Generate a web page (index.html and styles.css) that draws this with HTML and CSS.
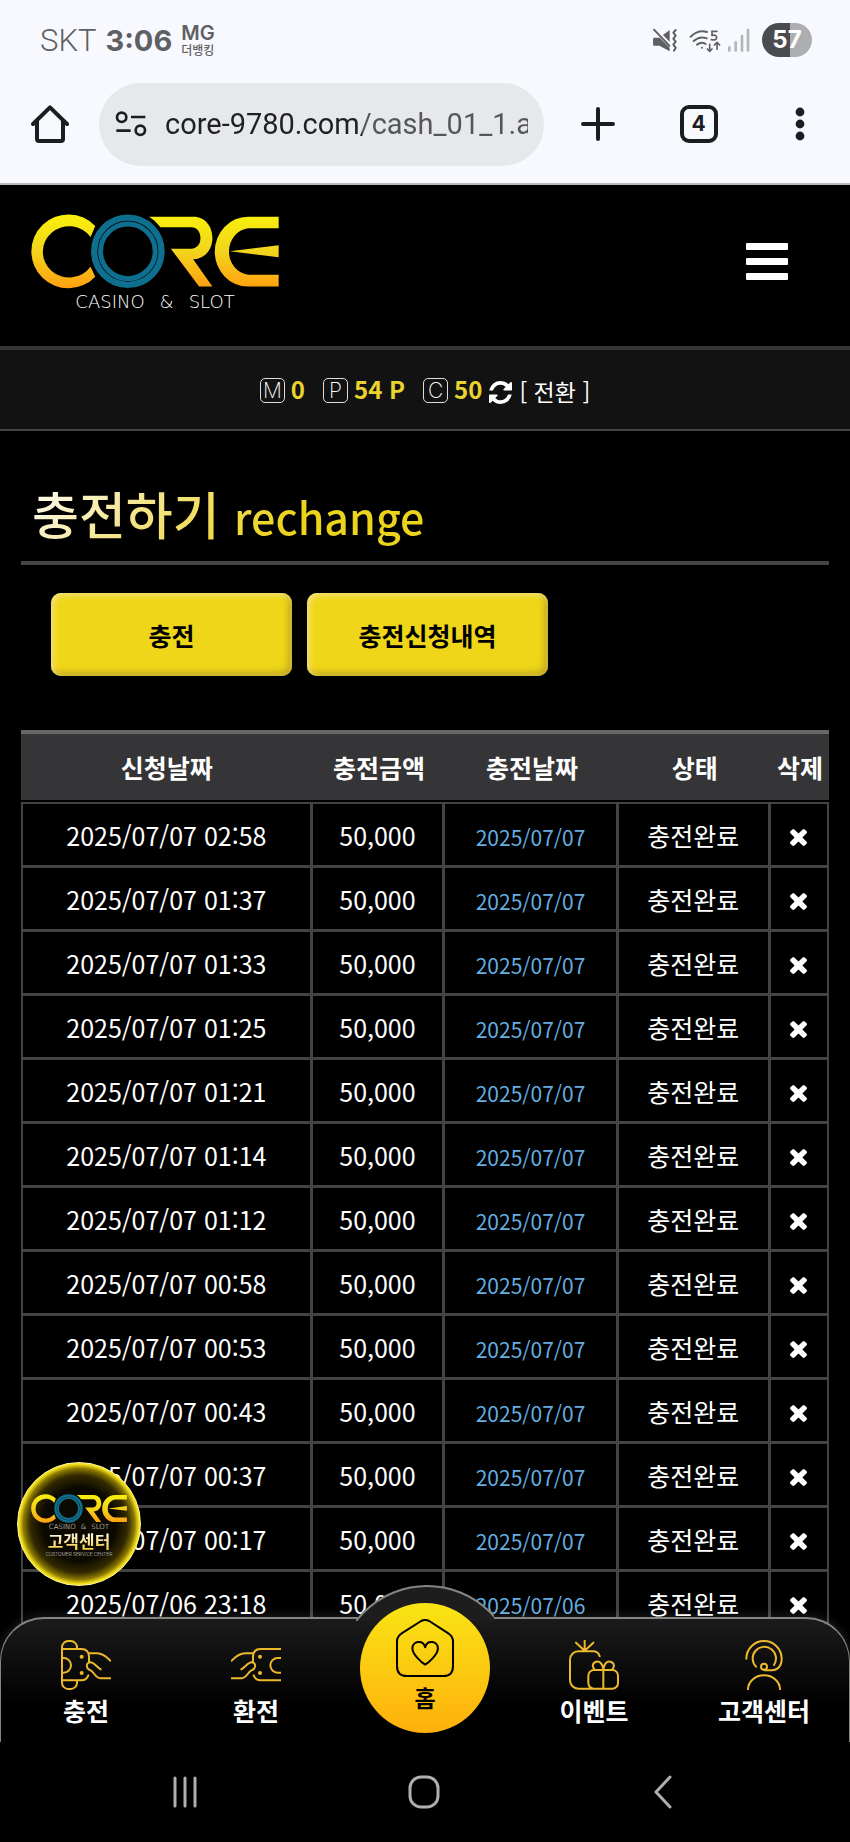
FILE: index.html
```html
<!DOCTYPE html>
<html lang="ko">
<head>
<meta charset="utf-8">
<meta name="viewport" content="width=device-width, initial-scale=1">
<title>CORE CASINO &amp; SLOT - 충전하기</title>
<link rel="stylesheet" href="styles.css">
</head>
<body>
<svg class="defs" aria-hidden="true">
  <defs>
    <linearGradient id="gold" x1="0" y1="75" x2="0" y2="297" gradientUnits="userSpaceOnUse">
      <stop offset="0" stop-color="#f8f00c"/><stop offset=".5" stop-color="#f3d41c"/><stop offset="1" stop-color="#ffa010"/>
    </linearGradient>
    <symbol id="logo" viewBox="93 74 745 225">
      <g fill="url(#gold)">
        <path d="M286 110A111 111 0 1 0 286 262L272 232A79 77 0 1 1 272 143Z"/>
        <path d="M448 82H582C615 82 638 110 638 146C638 182 614 209 580 210L638 292H598L513 178H574C592 178 602 164 602 146C602 128 592 114 574 114H482Q468 94 448 82Z"/>
        <path d="M837 82H745A100 105 0 0 0 745 292H837V256H745A65 70 0 0 1 745 117H837Z"/>
        <path d="M690 186L837 168V204Z"/>
      </g>
      <g fill="none" stroke="#0f6f8f">
        <circle cx="384" cy="186" r="101" stroke-width="19"/>
        <circle cx="384" cy="186" r="82" stroke-width="15"/>
      </g>
    </symbol>
    <symbol id="times" viewBox="110 366 1188 1188">
      <path fill="currentColor" d="M1298 1322q0 40-28 68l-136 136q-28 28-68 28t-68-28l-294-294-294 294q-28 28-68 28t-68-28l-136-136q-28-28-28-68t28-68l294-294-294-294q-28-28-28-68t28-68l136-136q28-28 68-28t68 28l294 294 294-294q28-28 68-28t68 28l136 136q28 28 28 68t-28 68l-294 294 294 294q28 28 28 68z"/>
    </symbol>
  </defs>
</svg>

<div class="status">
  <span class="carrier">SKT</span>
  <span class="clock">3:06</span>
  <span class="notice"><b>MG</b><small>더뱅킹</small></span>
  <span class="indicators">
    <svg width="26" height="26" viewBox="0 0 78 78" fill="#5f6064" stroke="#5f6064">
      <path stroke="none" d="M4 32H22L53 9V73L22 56H4Q2 44 4 32Z"/>
      <path d="M6 6L60 60" stroke="#f8f9fe" stroke-width="12"/>
      <path d="M6 8L52 56" stroke-width="6" stroke-linecap="round"/>
      <path fill="none" stroke-width="6" stroke-linecap="round" stroke-linejoin="round" d="M71 9L64 17L71 26L64 35L71 44L64 53L71 62L66 71"/>
    </svg>
    <svg class="wifi" width="32" height="26" viewBox="0 0 96 78" fill="none" stroke="#5f6064" stroke-width="6" stroke-linecap="round">
      <path d="M5 29Q28 7 54 15"/><path d="M14 42Q32 26 53 34"/><path d="M24 53Q37 43 50 51"/>
      <circle cx="39" cy="62" r="3" fill="#5f6064" stroke="none"/>
      <path stroke-width="5" d="M84 13H69V25Q83 22 83 32Q82 41 67 38M62 52V72M55 66L62 73L69 66M84 67V47M76 54L84 46L92 54"/>
    </svg>
    <svg width="24" height="26" viewBox="0 0 72 78" fill="#b5b6ba">
      <rect x="3" y="58" width="8" height="16" rx="3"/><rect x="22" y="42" width="8" height="32" rx="3"/><rect x="41" y="23" width="8" height="51" rx="3"/><rect x="59" y="5" width="8" height="69" rx="3"/>
    </svg>
    <span class="battery">57</span>
  </span>
</div>

<div class="toolbar">
  <button class="tool tool-home" type="button" aria-label="홈페이지">
    <svg width="38" height="38" viewBox="0 0 114 114" fill="none" stroke="#1c1d21" stroke-width="12" stroke-linecap="round" stroke-linejoin="round"><path d="M6 57L57 7L108 57M18 47V102Q18 108 24 108H90Q96 108 96 102V47"/></svg>
  </button>
  <label class="address">
    <svg width="32" height="28" viewBox="0 0 96 84" fill="none" stroke="#1c1d21" stroke-width="8"><circle cx="20" cy="22" r="14"/><path d="M48 21H91M4 62H47"/><circle cx="76" cy="61" r="14"/></svg>
    <input class="url" type="text" value="core-9780.com/cash_01_1.asp" aria-label="주소">
  </label>
  <button class="tool" type="button" aria-label="새 탭">
    <svg width="34" height="34" viewBox="0 0 34 34" stroke="#1c1d21" stroke-width="4" stroke-linecap="round"><path d="M17 2V32M2 17H32"/></svg>
  </button>
  <button class="tool" type="button" aria-label="탭 4개"><span class="tabs">4</span></button>
  <button class="tool" type="button" aria-label="메뉴">
    <svg width="10" height="34" viewBox="0 0 10 34" fill="#1c1d21"><circle cx="5" cy="5" r="4.4"/><circle cx="5" cy="17" r="4.4"/><circle cx="5" cy="29" r="4.4"/></svg>
  </button>
</div>

<div class="page">
  <header class="header">
    <a class="brand" href="#">
      <svg class="brand-mark" role="img" aria-label="CORE"><use href="#logo"/></svg>
      <span class="brand-sub"><span>CASINO</span><span>&amp;</span><span>SLOT</span></span>
    </a>
    <button class="burger" type="button" aria-label="전체 메뉴"><i></i><i></i><i></i></button>
  </header>

  <div class="wallet">
    <span class="coin"><i>M</i><b>0</b></span>
    <span class="coin"><i>P</i><b>54 P</b></span>
    <span class="coin"><i>C</i><b>50</b></span>
    <button class="convert" type="button">
      <svg width="23" height="23" viewBox="0 0 1536 1536" fill="#fff"><path d="M1511 928q0 5-1 7-64 268-268 434.500t-478 166.500q-146 0-282.500-55t-243.500-157l-129 129q-19 19-45 19t-45-19-19-45v-448q0-26 19-45t45-19h448q26 0 45 19t19 45-19 45l-137 137q71 66 161 102t187 36q134 0 250-65t186-179q11-17 53-117 8-23 30-23h192q13 0 22.500 9.500t9.500 22.500zm25-800v448q0 26-19 45t-45 19h-448q-26 0-45-19t-19-45 19-45l138-138q-148-137-349-137-134 0-250 65t-186 179q-11 17-53 117-8 23-30 23h-199q-13 0-22.500-9.500t-9.500-22.500v-7q65-268 270-434.500t480-166.500q146 0 284 55.500t245 156.500l130-129q19-19 45-19t45 19 19 45z"/></svg>
      <span>[ 전환 ]</span>
    </button>
  </div>

  <main class="content">
    <h1 class="title"><span>충전하기 <small>rechange</small></span></h1>
    <div class="actions">
      <button class="gold-btn" type="button">충전</button>
      <button class="gold-btn" type="button">충전신청내역</button>
    </div>
    <table class="history">
      <colgroup><col class="c-req"><col class="c-amt"><col class="c-date"><col class="c-state"><col class="c-del"></colgroup>
      <thead>
        <tr><th scope="col">신청날짜</th><th scope="col">충전금액</th><th scope="col">충전날짜</th><th scope="col">상태</th><th scope="col">삭제</th></tr>
      </thead>
      <tbody>
        <tr><td>2025/07/07 02:58</td><td>50,000</td><td class="done">2025/07/07</td><td>충전완료</td><td><button class="del" type="button" aria-label="삭제"><svg><use href="#times"/></svg></button></td></tr>
        <tr><td>2025/07/07 01:37</td><td>50,000</td><td class="done">2025/07/07</td><td>충전완료</td><td><button class="del" type="button" aria-label="삭제"><svg><use href="#times"/></svg></button></td></tr>
        <tr><td>2025/07/07 01:33</td><td>50,000</td><td class="done">2025/07/07</td><td>충전완료</td><td><button class="del" type="button" aria-label="삭제"><svg><use href="#times"/></svg></button></td></tr>
        <tr><td>2025/07/07 01:25</td><td>50,000</td><td class="done">2025/07/07</td><td>충전완료</td><td><button class="del" type="button" aria-label="삭제"><svg><use href="#times"/></svg></button></td></tr>
        <tr><td>2025/07/07 01:21</td><td>50,000</td><td class="done">2025/07/07</td><td>충전완료</td><td><button class="del" type="button" aria-label="삭제"><svg><use href="#times"/></svg></button></td></tr>
        <tr><td>2025/07/07 01:14</td><td>50,000</td><td class="done">2025/07/07</td><td>충전완료</td><td><button class="del" type="button" aria-label="삭제"><svg><use href="#times"/></svg></button></td></tr>
        <tr><td>2025/07/07 01:12</td><td>50,000</td><td class="done">2025/07/07</td><td>충전완료</td><td><button class="del" type="button" aria-label="삭제"><svg><use href="#times"/></svg></button></td></tr>
        <tr><td>2025/07/07 00:58</td><td>50,000</td><td class="done">2025/07/07</td><td>충전완료</td><td><button class="del" type="button" aria-label="삭제"><svg><use href="#times"/></svg></button></td></tr>
        <tr><td>2025/07/07 00:53</td><td>50,000</td><td class="done">2025/07/07</td><td>충전완료</td><td><button class="del" type="button" aria-label="삭제"><svg><use href="#times"/></svg></button></td></tr>
        <tr><td>2025/07/07 00:43</td><td>50,000</td><td class="done">2025/07/07</td><td>충전완료</td><td><button class="del" type="button" aria-label="삭제"><svg><use href="#times"/></svg></button></td></tr>
        <tr><td>2025/07/07 00:37</td><td>50,000</td><td class="done">2025/07/07</td><td>충전완료</td><td><button class="del" type="button" aria-label="삭제"><svg><use href="#times"/></svg></button></td></tr>
        <tr><td>2025/07/07 00:17</td><td>50,000</td><td class="done">2025/07/07</td><td>충전완료</td><td><button class="del" type="button" aria-label="삭제"><svg><use href="#times"/></svg></button></td></tr>
        <tr><td>2025/07/06 23:18</td><td>50,000</td><td class="done">2025/07/06</td><td>충전완료</td><td><button class="del" type="button" aria-label="삭제"><svg><use href="#times"/></svg></button></td></tr>
      </tbody>
    </table>
  </main>

  <a class="support" href="#">
    <svg class="support-mark" role="img" aria-label="CORE"><use href="#logo"/></svg>
    <span class="support-sub"><span>CASINO</span><span>&amp;</span><span>SLOT</span></span>
    <strong>고객센터</strong>
    <small>CUSTOMER SERVICE CENTER</small>
  </a>

  <nav class="dock">
    <span class="bump"></span>
    <a class="dock-item" href="#">
      <svg viewBox="0 0 150 150"><path d="M3 26V22A19 19 0 0 1 22 3H29A19 19 0 0 1 48 22V26M3 22V128A19 19 0 0 0 22 147H29A19 19 0 0 0 48 128V122M3 27H62Q83 27 84 50V66M3 121H62Q76 121 82 106M3 54H8A22 22 0 0 1 8 98H3M84 40H108C127 40 138 52 148 62M148 115H120C103 115 101 98 89 91C74 86 74 67 88 67C98 67 106 80 119 88"/><circle class="dot" cx="62" cy="50" r="6"/><circle class="dot" cx="62" cy="99" r="6"/></svg>
      <span>충전</span>
    </a>
    <a class="dock-item" href="#">
      <svg viewBox="0 0 150 150"><path d="M149 27H88Q67 27 66 50V66M149 121H88Q74 121 68 106M149 54H140A22 22 0 0 0 140 98H149M66 40H42C23 40 12 52 2 62M2 115H30C47 115 49 98 61 91C76 86 76 67 62 67C52 67 44 80 31 88"/><circle class="dot" cx="87" cy="50" r="6"/><circle class="dot" cx="87" cy="99" r="6"/></svg>
      <span>환전</span>
    </a>
    <a class="dock-item dock-home" href="#">
      <svg viewBox="0 0 173 173"><path d="M75 6Q87 0 99 6L155 42Q170 52 170 66V140Q170 170 142 170H32Q3 170 3 140V66Q3 52 18 42ZM87 136C77 130 49 106 49 88C49 66 80 60 87 84C94 60 125 66 125 88C125 106 97 130 87 136Z"/></svg>
      <span>홈</span>
    </a>
    <a class="dock-item" href="#">
      <svg viewBox="0 0 150 150"><path d="M92 49Q88 34 72 34H28A25 25 0 0 0 3 59V121A25 25 0 0 0 28 146H80M47 2V30M21 8L47 32L73 8M75 90H130A17 17 0 0 1 147 107V129A17 17 0 0 1 130 146H75A17 17 0 0 1 58 129V107A17 17 0 0 1 75 90ZM103 90V146M103 88C101 72 93 63 82 65C70 68 68 80 77 89M103 88C105 72 113 63 124 65C136 68 138 80 129 89"/></svg>
      <span>이벤트</span>
    </a>
    <a class="dock-item" href="#">
      <svg viewBox="0 0 150 150"><path d="M22 56A53 53 0 0 1 128 56C128 80 114 91 92 91H76M51 80A35 35 0 1 1 105 75M27 148A48 42 0 0 1 123 148"/><circle cx="75" cy="80" r="9"/></svg>
      <span>고객센터</span>
    </a>
  </nav>
</div>

<div class="sysnav">
  <button type="button" aria-label="최근 앱"><svg width="26" height="34" viewBox="0 0 26 34"><path d="M3 3V31M13 3V31M23 3V31"/></svg></button>
  <button type="button" aria-label="홈"><svg width="34" height="36" viewBox="0 0 34 36"><rect x="3" y="3" width="28" height="30" rx="11"/></svg></button>
  <button type="button" aria-label="뒤로"><svg width="22" height="36" viewBox="0 0 22 36"><path d="M18 3L4 18L18 33"/></svg></button>
</div>
</body>
</html>
```

FILE: styles.css
```css
* { box-sizing: border-box; }

body {
  margin: 0;
  min-height: 100vh;
  display: flex;
  flex-direction: column;
  background: #000;
  color: #fff;
  font-family: "Noto Sans CJK KR", sans-serif;
  font-size: 25px;
}

button {
  margin: 0;
  padding: 0;
  border: 0;
  background: none;
  color: inherit;
  font: inherit;
}

a { color: inherit; text-decoration: none; }
i { font-style: normal; }
svg { display: block; }
.defs { position: absolute; width: 0; height: 0; }

/* phone status bar */
.status {
  display: flex;
  align-items: center;
  gap: 9px;
  height: 80px;
  padding: 0 38px 0 40px;
  background: #f8f9fe;
  color: #5f6064;
  font-family: Roboto, sans-serif;
}
.carrier { font-size: 31px; font-weight: 300; }
.clock { font-family: Inter, sans-serif; font-size: 29px; font-weight: 700; }
.notice { display: flex; flex-direction: column; }
.notice b { font: 600 20px/20px Inter, sans-serif; }
.notice small { font: 500 12px/14px "Noto Sans CJK KR", sans-serif; }
.indicators { display: flex; align-items: center; gap: 6px; margin-left: auto; }
.wifi { margin-left: 5px; }
.battery {
  width: 50px;
  margin-left: 5px;
  border-radius: 17px;
  background: linear-gradient(90deg, #4b4c50 56%, #adaeb2 56%);
  color: #fff;
  font: 700 24px/34px Inter, sans-serif;
  text-align: center;
}

/* browser toolbar */
.toolbar {
  display: flex;
  align-items: center;
  height: 105px;
  padding-bottom: 15px;
  border-bottom: 2px solid #bbb;
  background: #f8f9fe;
  color: #1c1d21;
}
.tool { display: flex; justify-content: center; width: 101px; flex: none; }
.tool-home { width: 99px; }
.address {
  display: flex;
  flex: 1;
  align-items: center;
  gap: 18px;
  min-width: 0;
  height: 83px;
  margin-right: 3px;
  padding: 0 16px;
  border-radius: 42px;
  background: #e7e8ec;
}
.address svg { flex: none; }
.url {
  flex: 1;
  min-width: 0;
  padding: 0;
  border: 0;
  outline: 0;
  background: linear-gradient(90deg, #1f2024 197px, #55565a 197px);
  -webkit-background-clip: text;
  background-clip: text;
  color: transparent;
  font: 400 29px/40px Roboto, sans-serif;
}
.tabs {
  width: 38px;
  border: 4px solid #1c1d21;
  border-radius: 9px;
  font: 700 21px/30px Inter, sans-serif;
}

/* site */
.page { position: relative; flex: 1; overflow: hidden; }

.header {
  display: flex;
  align-items: center;
  justify-content: space-between;
  height: 161px;
  padding: 0 62px 8px 31px;
}
.brand { display: flex; flex-direction: column; align-items: center; gap: 3px; padding-top: 3px; }
.brand-mark { width: 248px; height: 75px; }
.brand-sub { display: flex; gap: 15px; font: 200 18px/20px "DejaVu Sans", sans-serif; }
.burger { display: flex; flex-direction: column; gap: 8px; }
.burger i { width: 42px; height: 7px; border-radius: 1px; background: #fff; }

.wallet {
  display: flex;
  align-items: center;
  justify-content: center;
  height: 85px;
  padding-bottom: 2px;
  border-top: 4px solid #353537;
  border-bottom: 2px solid #444;
  background: #121213;
}
.coin { display: flex; align-items: center; gap: 6px; margin-right: 18px; font-size: 24px; }
.coin:nth-child(3) { margin-right: 7px; }
.coin i {
  width: 25px;
  margin-top: 4px;
  border: 1px solid #ddd;
  border-radius: 5px;
  font: 200 21px/23px Inter, sans-serif;
  text-align: center;
}
.coin b { color: #ead22f; }
.convert { display: flex; align-items: center; gap: 7px; margin-top: 4px; font-size: 23px; }
.convert svg { margin-top: 4px; }

.content { padding: 46px 21px 100px; }
.title {
  margin: 0;
  padding: 0 11px 12px;
  border-bottom: 4px solid #454547;
  font-size: 51px;
  font-weight: 500;
  line-height: 72px;
}
.title span {
  background: linear-gradient(135deg, #fff 0, #f4e58c 30%, #ecd31c 65%);
  -webkit-background-clip: text;
  background-clip: text;
  color: transparent;
}
.title small { font-size: 43px; line-height: 1; }

.actions { display: flex; gap: 15px; padding: 28px 30px 54px; }
.gold-btn {
  width: 241px;
  height: 83px;
  border-radius: 10px;
  background: #efd618;
  box-shadow: inset 2px 2px 6px #f6e68c, inset -3px -3px 7px #b89e1a;
  color: #000;
  font-weight: 700;
}

.history {
  width: 100%;
  border-spacing: 0;
  table-layout: fixed;
  text-align: center;
}
.c-req { width: 36.1%; }
.c-amt { width: 16.4%; }
.c-date { width: 21.5%; }
.c-state { width: 18.8%; }
.c-del { width: 7.2%; }
.history th {
  height: 72px;
  padding: 0;
  border-top: 4px solid #666567;
  border-bottom: 2px solid #000;
  background: #353436;
  font-weight: 700;
  white-space: nowrap;
}
.history td {
  height: 64px;
  padding: 0;
  border: solid #444345;
  border-width: 0 3px 3px 0;
  line-height: 36px;
}
.history tr td:first-child { border-left-width: 2px; }
.history tr td:last-child { border-right-width: 2px; }
.history tbody tr:first-child td { height: 66px; border-top-width: 2px; }
.history .done { padding-top: 4px; color: #65aee0; font-size: 21px; }
.del { display: block; margin: 6px auto 0; }
.del svg { width: 17px; height: 17px; }

/* floating support badge */
.support {
  position: absolute;
  left: 17px;
  bottom: 156px;
  display: flex;
  flex-direction: column;
  align-items: center;
  width: 124px;
  height: 124px;
  padding-top: 31px;
  border: 1px solid #fff6a0;
  border-radius: 50%;
  background: radial-gradient(closest-side, #0c0900 60%, #332a00 80%, #8a7800 91%, #f2e01c 98%);
}
.support-mark { width: 96px; height: 29px; }
.support-sub { display: flex; gap: 5px; font: 200 7px/8px "DejaVu Sans", sans-serif; }
.support strong {
  background: linear-gradient(#fff, #f5cf3c);
  -webkit-background-clip: text;
  background-clip: text;
  color: transparent;
  font-size: 17px;
  line-height: 19px;
}
.support small { color: #ccc; font: 300 5px/8px Roboto, sans-serif; }

/* bottom dock */
.dock {
  position: absolute;
  inset: auto 0 0;
  display: flex;
  height: 125px;
  border: solid #85857f;
  border-width: 2px 1px 0;
  border-radius: 44px 44px 0 0;
  background: linear-gradient(#1b1b1c, #000 70%);
  box-shadow: 0 0 12px rgba(255, 255, 255, .15);
}
.bump {
  position: absolute;
  top: -34px;
  left: 50%;
  width: 138px;
  height: 36px;
  overflow: hidden;
  transform: translateX(-50%);
}
.bump::before {
  content: "";
  position: absolute;
  top: 0;
  left: -19px;
  width: 176px;
  height: 176px;
  border: 2px solid #85857f;
  border-radius: 50%;
  background: #1d1d1e;
}
.dock-item {
  position: relative;
  display: flex;
  flex: 1;
  flex-direction: column;
  align-items: center;
  padding-top: 21px;
  font-weight: 700;
  line-height: 40px;
}
.dock svg {
  width: 50px;
  height: 50px;
  fill: none;
  stroke: #edb92c;
  stroke-width: 6;
  stroke-linecap: round;
  stroke-linejoin: round;
}
.dock .dot { fill: #edb92c; stroke: none; }
.dock-home {
  flex: none;
  width: 130px;
  height: 130px;
  margin: -16px 19px 0;
  padding-top: 16px;
  border-radius: 50%;
  background: linear-gradient(#f8e414, #ffb00c);
  color: #000;
  font-size: 23px;
}
.dock .dock-home svg { width: 58px; height: 58px; stroke: #000; }

/* phone navigation keys */
.sysnav {
  display: flex;
  align-items: center;
  justify-content: space-between;
  height: 100px;
  padding: 0 68px 0 66px;
}
.sysnav button { display: flex; justify-content: center; width: 238px; }
.sysnav svg { fill: none; stroke: #b0aeb0; stroke-width: 3; stroke-linecap: round; stroke-linejoin: round; }
```
